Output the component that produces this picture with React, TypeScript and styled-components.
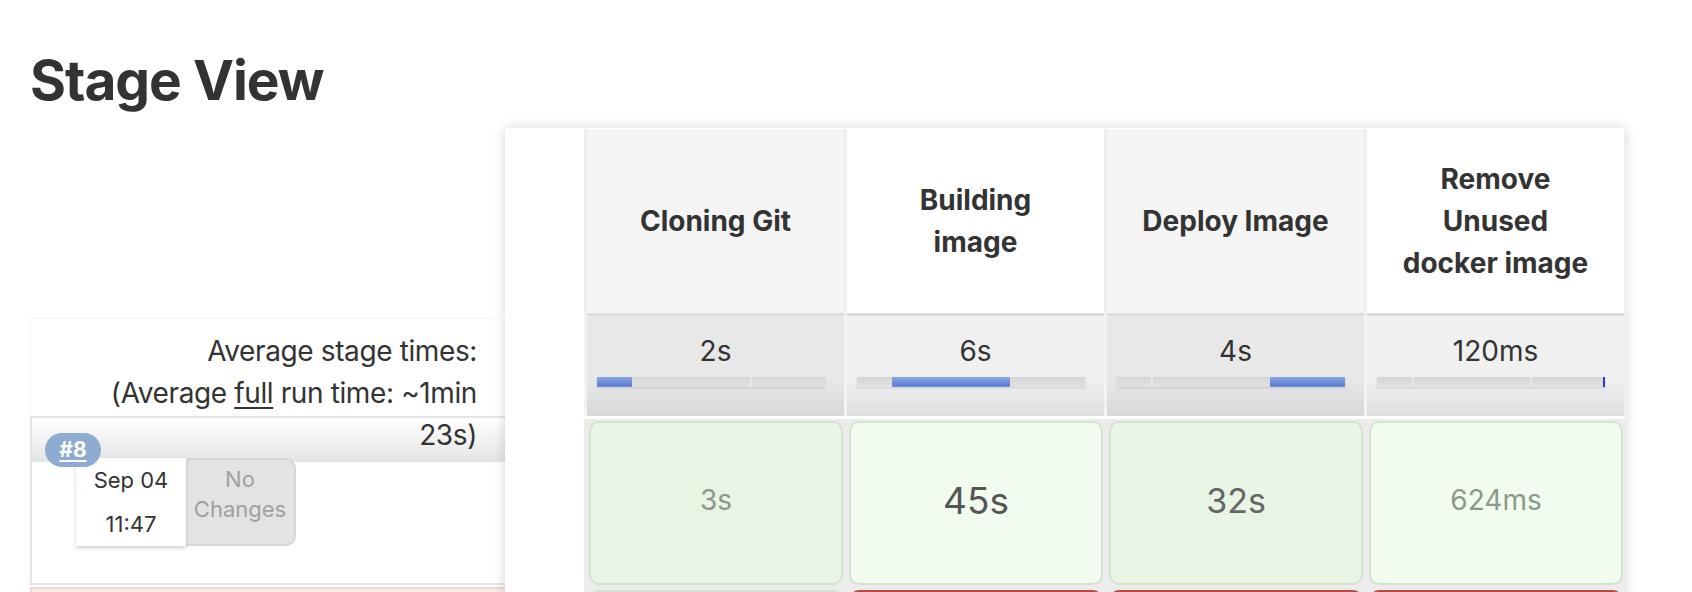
import React from 'react';
import styled, { createGlobalStyle } from 'styled-components';

const GlobalStyle = createGlobalStyle`
  html, body { margin: 0; padding: 0; background: #fff; }
  body {
    font-family: Inter, "Noto Sans", "Liberation Sans", sans-serif;
    color: #333;
    -webkit-font-smoothing: antialiased;
  }
`;

type Stage = {
  name: string[];
  avg: string;
  fill: [number, number];
  ticks: number[];
  thin?: boolean;
};

type Cell = { text: string; size: number; color: string; status: 'ok' | 'failed' };

const stages: Stage[] = [
  { name: ['Cloning Git'], avg: '2s', fill: [0, 35], ticks: [153] },
  { name: ['Building', 'image'], avg: '6s', fill: [35, 118], ticks: [] },
  { name: ['Deploy Image'], avg: '4s', fill: [153, 75], ticks: [34] },
  { name: ['Remove', 'Unused', 'docker image'], avg: '120ms', fill: [226, 2], ticks: [35, 153], thin: true },
];

const runs: { id: string; failed: boolean; cells: Cell[] }[] = [
  {
    id: '#8',
    failed: false,
    cells: [
      { text: '3s', size: 28, color: '#8b998a', status: 'ok' },
      { text: '45s', size: 37, color: '#555', status: 'ok' },
      { text: '32s', size: 34, color: '#666', status: 'ok' },
      { text: '624ms', size: 28, color: '#8b998a', status: 'ok' },
    ],
  },
  {
    id: '#7',
    failed: true,
    cells: [
      { text: '', size: 28, color: '#8b998a', status: 'ok' },
      { text: '', size: 28, color: '#fff', status: 'failed' },
      { text: '', size: 28, color: '#fff', status: 'failed' },
      { text: '', size: 28, color: '#fff', status: 'failed' },
    ],
  },
];

const Page = styled.div`
  padding: 47px 0 0 30px;
`;

const Title = styled.h2`
  margin: 0 0 15px;
  font-size: 55px;
  line-height: 66px;
  font-weight: 700;
  letter-spacing: -1px;
  color: #333;
`;

const Board = styled.div`
  display: flex;
  align-items: flex-start;
`;

/* ---------- left side ---------- */

const Side = styled.div`
  width: 475px;
  flex: none;
  display: flex;
  flex-direction: column;
`;

const AvgArea = styled.div`
  height: 288px;
  box-sizing: border-box;
  padding-top: 190px;
  position: relative;
  z-index: 2;
`;

const AvgBox = styled.div`
  height: 98px;
  box-sizing: border-box;
  border: 1px solid #f5f5f5;
  border-bottom: none;
  border-right: none;
  padding: 11px 28px 0 0;
  text-align: right;
  font-size: 28px;
  line-height: 42px;
  letter-spacing: -0.38px;
  white-space: nowrap;
  color: #333;
`;

const Under = styled.span`
  text-decoration: underline;
  text-underline-offset: 4px;
  text-decoration-thickness: 2px;
`;

const BuildRow = styled.div<{ $failed?: boolean }>`
  position: relative;
  height: 169px;
  box-sizing: border-box;
  border: 2px solid ${(p) => (p.$failed ? '#f3d6d3' : '#e6e6e6')};
  border-right: none;
  margin-bottom: 2px;
  padding: 40px 0 0 44px;
  display: flex;
  align-items: flex-start;
  background: ${(p) =>
    p.$failed
      ? '#fdebe9'
      : 'linear-gradient(#ffffff, #e4e4e4) 0 0 / 100% 44px no-repeat, #ffffff'};
`;

const Badge = styled.a`
  position: absolute;
  left: 13px;
  top: 15px;
  width: 56px;
  height: 34px;
  border-radius: 17px;
  background: #8eabd1;
  color: #fff;
  font-size: 21px;
  font-weight: 700;
  line-height: 34px;
  text-align: center;
  text-decoration: underline;
  text-underline-offset: 3px;
  text-decoration-thickness: 2px;
  z-index: 2;
`;

const DateBox = styled.div`
  width: 110px;
  height: 88px;
  background: #fff;
  box-shadow: 0 2px 4px rgba(0, 0, 0, 0.18);
  font-size: 22px;
  line-height: 44px;
  text-align: center;
  color: #333;
  position: relative;
  z-index: 1;
`;

const ChangesBox = styled.div`
  width: 110px;
  height: 88px;
  box-sizing: border-box;
  background: #e3e3e3;
  border: 2px solid #d6d6d6;
  border-left: none;
  border-radius: 0 10px 10px 0;
  padding-top: 4px;
  font-size: 22px;
  line-height: 30px;
  text-align: center;
  color: #a0a0a0;
`;

/* ---------- stage table ---------- */

const StageTable = styled.div`
  width: 1120px;
  flex: none;
  background: #fff;
  padding-top: 1px;
  box-shadow: 0 0 12px rgba(0, 0, 0, 0.16);
  position: relative;
  z-index: 1;
  display: flex;
  flex-direction: column;
`;

const Row = styled.div<{ $gap: string }>`
  display: grid;
  grid-template-columns: 79px repeat(4, 257px);
  column-gap: 3px;
  padding-right: 1px;
  background: ${(p) => p.$gap};
`;

const Blank = styled.div`
  background: #fff;
`;

const HeadCell = styled.div<{ $odd: boolean }>`
  height: 184px;
  background: ${(p) => (p.$odd ? '#f5f5f5' : '#ffffff')};
  display: flex;
  align-items: center;
  justify-content: center;
  text-align: center;
  font-size: 28px;
  font-weight: 700;
  line-height: 42px;
  color: #333;
  white-space: nowrap;
`;

const AvgRow = styled(Row)`
  margin-bottom: 3px;
`;

const AvgCell = styled.div<{ $odd: boolean }>`
  height: 103px;
  box-sizing: border-box;
  border-top: 3px solid #dcdcdc;
  padding: 14px 0 0;
  background: ${(p) =>
    p.$odd
      ? 'linear-gradient(#e8e8e8 0%, #e8e8e8 62%, #d8d8d8 100%)'
      : 'linear-gradient(#f0f0f0 0%, #f0f0f0 62%, #dedede 100%)'};
`;

const AvgTime = styled.div`
  text-align: center;
  font-size: 28px;
  line-height: 42px;
  color: #333;
`;

const Bar = styled.div`
  position: relative;
  width: 228px;
  height: 10px;
  margin: 5px 0 0 10px;
  background: linear-gradient(#d6d6d6, #e2e2e2);
  box-shadow: 0 1px 2px rgba(0, 0, 0, 0.12);
`;

const Tick = styled.span`
  position: absolute;
  top: 0;
  width: 2px;
  height: 10px;
  background: linear-gradient(#e4e4e4, #ebebeb);
`;

const Fill = styled.span<{ $thin?: boolean }>`
  position: absolute;
  top: 0;
  height: 10px;
  background: ${(p) =>
    p.$thin ? '#1d3fd0' : 'linear-gradient(#8aa6e0, #5e7fd4 85%, #7c98dc)'};
`;

const RunRow = styled(Row)`
  padding-top: 2px;
  padding-bottom: 3px;
`;

const RunBlank = styled(Blank)`
  margin: -2px 0 -3px;
`;

const RunCell = styled.div<{ $odd: boolean; $status: 'ok' | 'failed'; $size: number; $color: string }>`
  height: 164px;
  box-sizing: border-box;
  border-radius: 10px;
  margin: 0 1px 0 2px;
  border: 2px solid ${(p) => (p.$status === 'failed' ? '#b84a44' : '#d4e3d0')};
  background: ${(p) =>
    p.$status === 'failed' ? '#cc5650' : p.$odd ? '#e8f4e4' : '#f1fcee'};
  display: flex;
  align-items: center;
  justify-content: center;
  padding-bottom: 6px;
  font-size: ${(p) => p.$size}px;
  color: ${(p) => p.$color};
`;

function ProgressBar({ stage }: { stage: Stage }) {
  return (
    <Bar>
      {stage.ticks.map((t) => (
        <Tick key={t} style={{ left: t }} />
      ))}
      <Fill $thin={stage.thin} style={{ left: stage.fill[0], width: stage.fill[1] }} />
    </Bar>
  );
}

export default function App() {
  return (
    <>
      <GlobalStyle />
      <Page>
        <Title>Stage View</Title>
        <Board>
          <Side>
            <AvgArea>
              <AvgBox>
                Average stage times:
                <br />
                (Average <Under>full</Under> run time: ~1min
                <br />
                23s)
              </AvgBox>
            </AvgArea>
            {runs.map((r) => (
              <BuildRow key={r.id} $failed={r.failed}>
                {!r.failed && (
                  <>
                    <Badge>{r.id}</Badge>
                    <DateBox>
                      Sep 04
                      <br />
                      11:47
                    </DateBox>
                    <ChangesBox>
                      No
                      <br />
                      Changes
                    </ChangesBox>
                  </>
                )}
              </BuildRow>
            ))}
          </Side>

          <StageTable>
            <Row $gap="#efefef">
              <Blank />
              {stages.map((s, i) => (
                <HeadCell key={i} $odd={i % 2 === 0}>
                  <div>
                    {s.name.map((l, j) => (
                      <div key={j}>{l}</div>
                    ))}
                  </div>
                </HeadCell>
              ))}
            </Row>
            <AvgRow $gap="#f3f3f3">
              <Blank />
              {stages.map((s, i) => (
                <AvgCell key={i} $odd={i % 2 === 0}>
                  <AvgTime>{s.avg}</AvgTime>
                  <ProgressBar stage={s} />
                </AvgCell>
              ))}
            </AvgRow>
            {runs.map((r) => (
              <RunRow key={r.id} $gap="#ececec">
                <RunBlank />
                {r.cells.map((c, i) => (
                  <RunCell
                    key={i}
                    $odd={i % 2 === 0}
                    $status={c.status}
                    $size={c.size}
                    $color={c.color}
                  >
                    {c.text}
                  </RunCell>
                ))}
              </RunRow>
            ))}
          </StageTable>
        </Board>
      </Page>
    </>
  );
}
